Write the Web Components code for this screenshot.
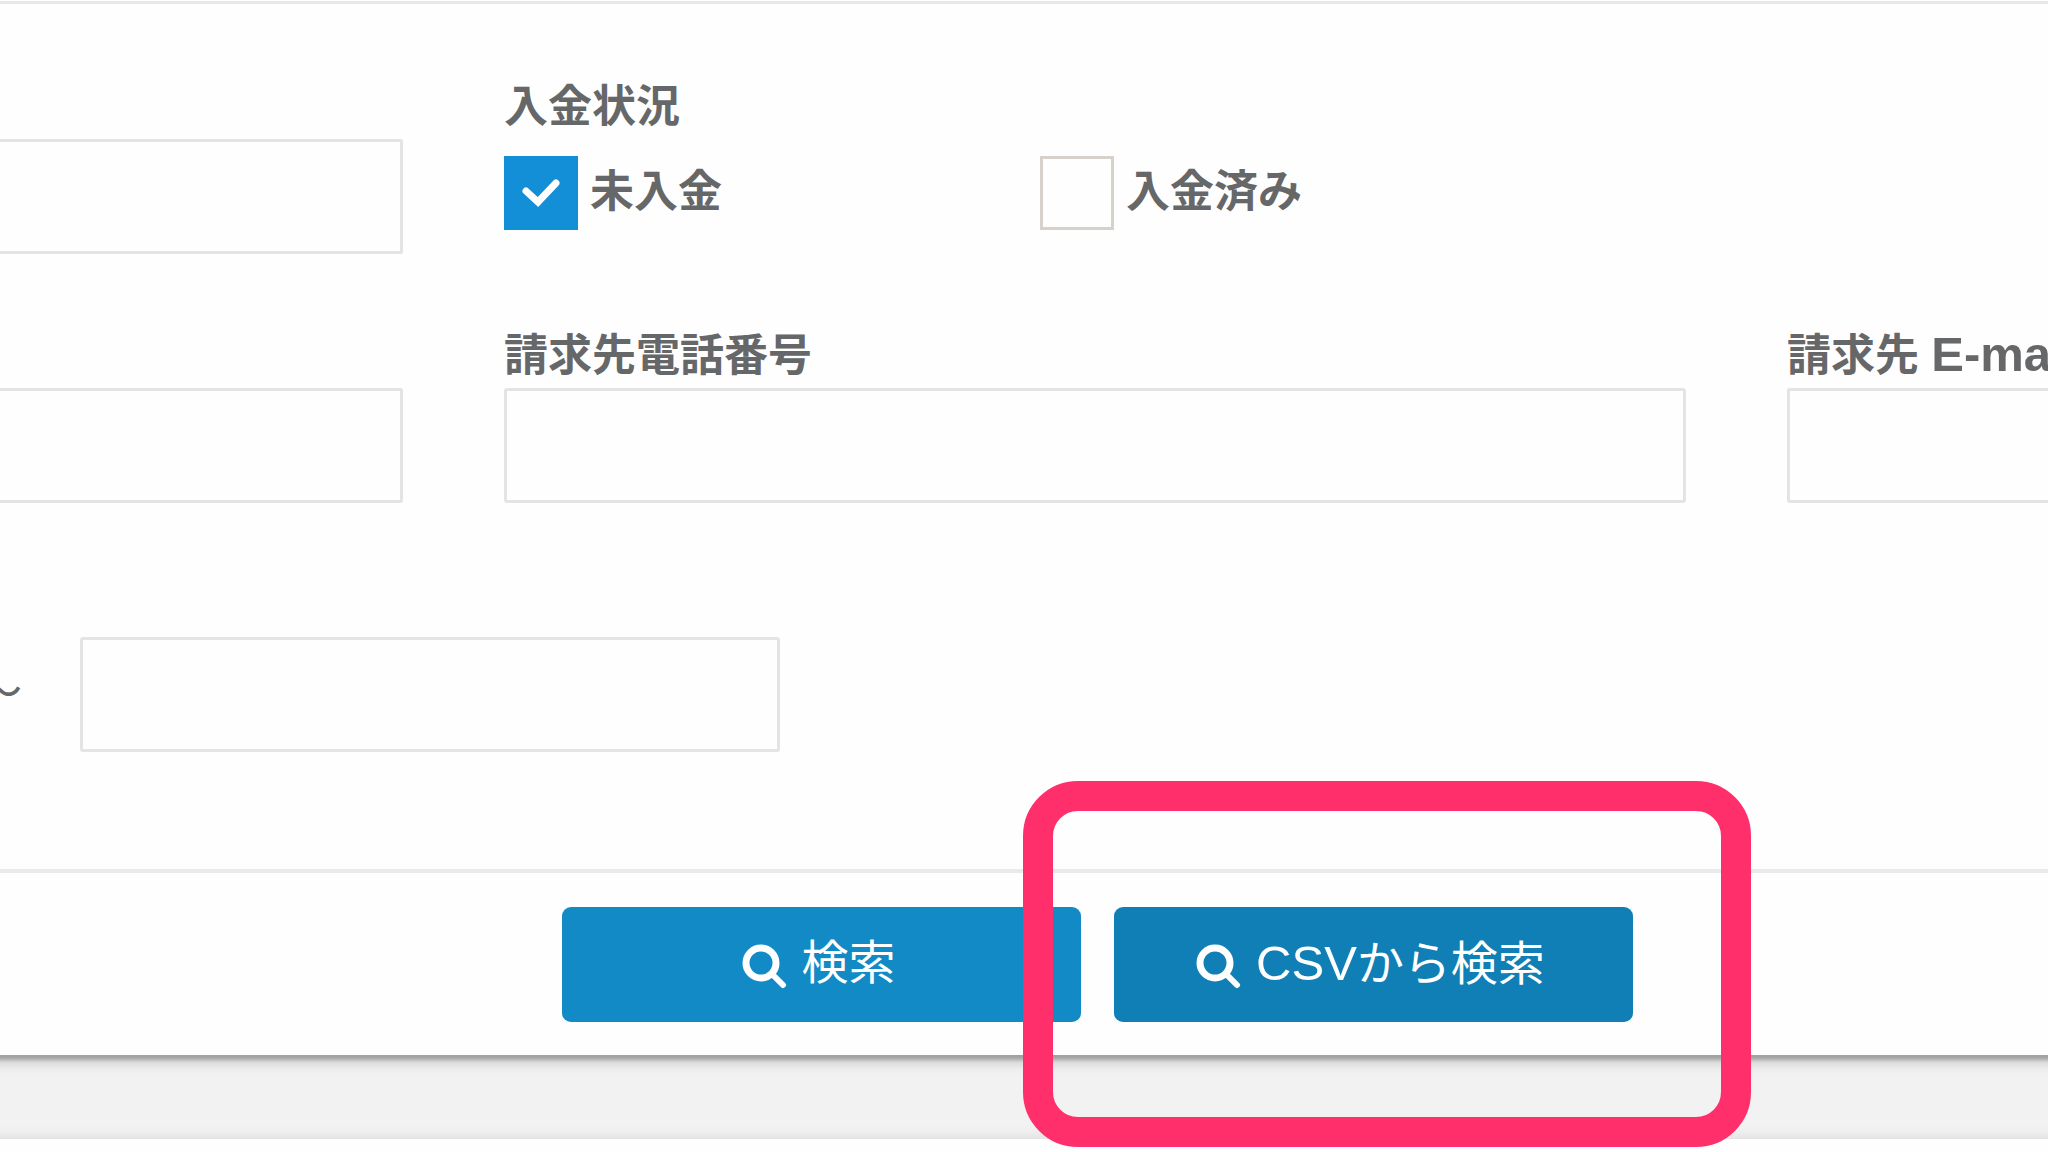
<!DOCTYPE html>
<html lang="ja">
<head>
<meta charset="utf-8">
<title>請求検索</title>
<style>
  html, body { margin: 0; height: 100%; }
  body {
    background: #f2f2f2;
    color: #666768;
    font-family: "Liberation Sans", "Noto Sans CJK JP", sans-serif;
    font-size: 44px;
    overflow: hidden;
  }
</style>
</head>
<body>
<search-page></search-page>

<script>
const define = (name, html, setup) => {
  const template = document.createElement('template');
  template.innerHTML = html;
  customElements.define(name, class extends HTMLElement {
    constructor() {
      super();
      this.attachShadow({ mode: 'open' }).append(template.content.cloneNode(true));
    }
    connectedCallback() { if (setup) setup(this, this.shadowRoot); }
  });
};

/* Text box with its label above; edge="start|end" runs off the side of the view. */
define('text-field', `
  <style>
    :host { display: block; min-width: 0; }
    label { display: block; height: 66px; line-height: 67px; font-weight: 700; white-space: nowrap; }
    input {
      display: block; box-sizing: border-box; width: 100%; height: 115px;
      margin: 0; padding: 0 24px; border: 3px solid #e3e4e6; border-radius: 3px;
      background: #fefefe; color: inherit; font: inherit; outline: none;
    }
    :host([edge="start"]) input { border-left: 0; border-radius: 0 3px 3px 0; }
    :host([edge="end"]) input { border-right: 0; border-radius: 3px 0 0 3px; }
    :host([bare]) label { display: none; }
    ::slotted(.latin) { font-size: 49px; line-height: 60px; }
  </style>
  <label for="box"><slot></slot></label>
  <input id="box" type="text">
`, (host, root) => {
  if (host.hasAttribute('name-for-reader'))
    root.getElementById('box').setAttribute('aria-label', host.getAttribute('name-for-reader'));
});

define('check-option', `
  <style>
    :host { display: block; }
    label { display: flex; align-items: center; gap: 12px; line-height: 72px; font-weight: 700; white-space: nowrap; }
    .box { display: grid; flex: none; }
    .box > * { grid-area: 1 / 1; width: 74px; height: 74px; }
    .text { padding-bottom: 2px; }
    input {
      appearance: none; box-sizing: border-box; margin: 0;
      border: 3px solid #d6d1ca; background: #fefefe;
    }
    input:checked { background: #128fd6; border-color: #128fd6; }
    svg { pointer-events: none; visibility: hidden; }
    input:checked + svg { visibility: visible; }
  </style>
  <label>
    <span class="box">
      <input type="checkbox">
      <svg viewBox="0 0 74 74" fill="none" stroke="#fefefe" stroke-width="7" aria-hidden="true">
        <path d="M22 35 34 46 52 27" stroke-linecap="round"/>
      </svg>
    </span>
    <span class="text"><slot></slot></span>
  </label>
`, (host, root) => {
  root.querySelector('input').checked = host.hasAttribute('checked');
});

define('check-group', `
  <style>
    :host { display: block; }
    fieldset { margin: 0; padding: 0; border: 0; min-width: 0; }
    legend { padding: 0; height: 66px; line-height: 67px; font-weight: 700; }
    .options { display: grid; grid-template-columns: 536fr 646fr; box-sizing: border-box; height: 115px; padding-top: 17px; }
  </style>
  <fieldset>
    <legend><slot name="title"></slot></legend>
    <div class="options"><slot></slot></div>
  </fieldset>
`);

define('search-button', `
  <style>
    :host { display: block; position: relative; flex: 0 1 519px; }
    button {
      display: flex; align-items: center; justify-content: center; gap: 15px;
      width: 100%; height: 115px; margin: 0; padding: 0 5px 0 0; border: 0; border-radius: 9px;
      background: #118ac5; color: #fff; font: inherit; font-size: 47px; line-height: 60px; white-space: nowrap;
    }
    button > span { padding-bottom: 3px; }
    :host([active]) button { background: #107fb6; }
    svg { width: 45px; height: 45px; flex: none; padding-top: 3px; }
    .marker { display: none; }
    ::slotted(.latin) { font-size: 49px; }
    :host([marked]) .marker {
      display: block; position: absolute; z-index: 2; pointer-events: none;
      inset: -126px -118px -125px -91px;
      border: 30px solid #ff2f6c; border-radius: 55px;
    }
  </style>
  <button type="button">
    <svg viewBox="0 0 45 45" fill="none" stroke="#fff" stroke-width="7" stroke-linecap="round" aria-hidden="true">
      <circle cx="19" cy="19" r="15"/>
      <path d="M30 30 41 41" stroke-width="6"/>
    </svg>
    <span><slot></slot></span>
  </button>
  <div class="marker"></div>
`);

define('search-panel', `
  <style>
    :host {
      display: block; position: relative; background: #fefefe; padding-top: 1px;
      box-shadow: 0 2px 3px 3px rgba(0,0,0,.2), 0 3px 12px 4px rgba(0,0,0,.2);
    }
    .fields {
      display: grid; grid-template-columns: 403fr 1182fr 261fr;
      column-gap: 101px; row-gap: 68px; align-items: end;
      border-top: 3px solid #e8e8e8; padding: 69px 0 68px;
    }
    .range { display: flex; align-items: center; padding-bottom: 117px; }
    .actions {
      display: flex; justify-content: center; gap: 33px;
      border-top: 4px solid #e8eaec; padding: 34px 0 33px 146px;
    }
  </style>
  <div class="fields"><slot></slot></div>
  <div class="range"><slot name="range"></slot></div>
  <div class="actions"><slot name="actions"></slot></div>
`);

define('range-end', `
  <style>
    :host { display: flex; align-items: center; width: 100%; padding-top: 66px; }
    .tilde { display: flex; justify-content: flex-end; width: 22px; margin-right: 58px; padding-bottom: 14px; }
    text-field { flex: 0 1 700px; }
  </style>
  <span class="tilde">〜</span>
  <text-field bare name-for-reader="終了"></text-field>
`);

define('search-page', `
  <style>
    :host { display: flex; flex-direction: column; gap: 84px; height: 100%; overflow: hidden; }
    search-panel, .next { margin: 0 -24px; padding-left: 24px; padding-right: 24px; }
    .next { flex: 1; background: #fefefe; box-shadow: 0 3px 14px 4px rgba(0,0,0,.1); }
  </style>
  <search-panel>
    <text-field edge="start" bare name-for-reader="請求番号"></text-field>
    <check-group>
      <span slot="title">入金状況</span>
      <check-option checked>未入金</check-option>
      <check-option>入金済み</check-option>
    </check-group>
    <span></span>
    <text-field edge="start" bare name-for-reader="請求先"></text-field>
    <text-field>請求先電話番号</text-field>
    <text-field edge="end">請求先 <span class="latin">E-mail</span></text-field>
    <range-end slot="range"></range-end>
    <search-button slot="actions">検索</search-button>
    <search-button slot="actions" active marked><span class="latin">CSV</span>から検索</search-button>
  </search-panel>
  <div class="next"></div>
`);
</script>
</body>
</html>
